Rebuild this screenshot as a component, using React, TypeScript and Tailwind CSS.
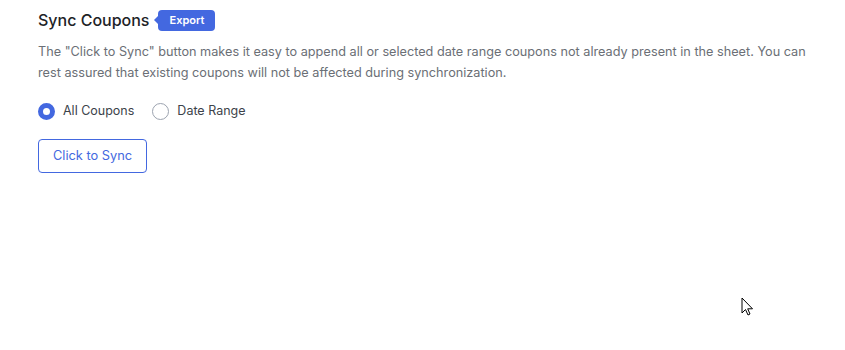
import React, { useState } from "react";

export default function App() {
  const [mode, setMode] = useState<"all" | "range">("all");

  return (
    <div className="relative min-h-[350px] w-full bg-white font-['Inter',sans-serif]">
      <div className="px-[38px] pt-[9px]">
        <div className="flex items-center">
          <h2 className="text-[16px] font-medium text-[#1d2327] leading-[22px]">Sync Coupons</h2>
          <span className="relative ml-[9px] rounded-[4px] bg-[#4368e0] px-[11px] py-[3px] text-[11px] font-semibold leading-[15px] text-white">
            <span className="absolute left-[-4px] top-1/2 h-0 w-0 -translate-y-1/2 border-y-[4px] border-r-[4px] border-y-transparent border-r-[#4368e0]" />
            Export
          </span>
        </div>

        <p className="mt-[10px] w-[772px] text-[12.7px] leading-[21px] text-[#6b6f76]">
          The "Click to Sync" button makes it easy to append all or selected date range coupons not already present in the sheet. You can rest assured that existing coupons will not be affected during synchronization.
        </p>

        <div className="mt-[19px] flex items-center gap-[18px] text-[12.5px] text-[#3c434a]">
          <label className="flex cursor-pointer items-center gap-[8px]" onClick={() => setMode("all")}>
            <span
              className={
                mode === "all"
                  ? "h-[17px] w-[17px] rounded-full border-[5px] border-[#4368e0] bg-white"
                  : "h-[17px] w-[17px] rounded-full border border-[#9ca3af] bg-white"
              }
            />
            All Coupons
          </label>
          <label className="flex cursor-pointer items-center gap-[8px]" onClick={() => setMode("range")}>
            <span
              className={
                mode === "range"
                  ? "h-[17px] w-[17px] rounded-full border-[5px] border-[#4368e0] bg-white"
                  : "h-[17px] w-[17px] rounded-full border border-[#9ca3af] bg-white"
              }
            />
            Date Range
          </label>
        </div>

        <button className="mt-[18px] h-[34px] w-[109px] rounded-[4px] border border-[#4368e0] bg-white text-[12.8px] text-[#4368e0]">
          Click to Sync
        </button>
      </div>

      <svg className="absolute left-[741px] top-[297px]" width="13" height="20" viewBox="0 0 13 20">
        <path d="M1 1 L1 16 L4.5 12.5 L7 18 L9 17 L6.7 11.8 L11.5 11.8 Z" fill="white" stroke="black" strokeWidth="1" strokeLinejoin="round" />
      </svg>
    </div>
  );
}
